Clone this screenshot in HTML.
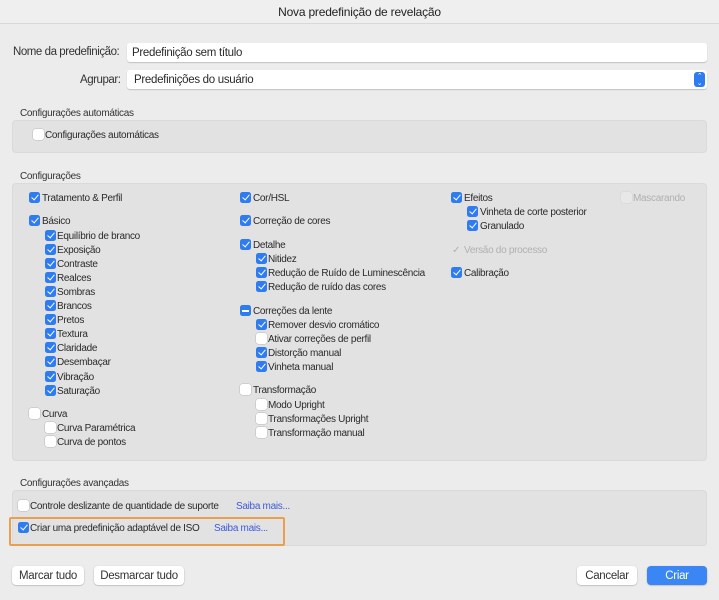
<!DOCTYPE html>
<html><head><meta charset="utf-8"><style>
*{margin:0;padding:0;box-sizing:border-box}
body{width:719px;height:600px;background:#ececec;font-family:"Liberation Sans",sans-serif;color:#2a2a2a;position:relative;overflow:hidden;font-size:10px;letter-spacing:-0.3px}
.a{position:absolute;white-space:nowrap}
.tb{position:absolute;left:0;top:0;width:719px;height:24px;background:#f0eff0;border-bottom:1px solid #d8d8d8;text-align:center;font-size:12px;line-height:24px;color:#222;letter-spacing:-0.2px}
.in{position:absolute;left:127px;width:580px;height:19px;background:#fff;border-radius:3px;box-shadow:0 1px 1px rgba(0,0,0,.18);font-size:11.5px;line-height:20px;padding-left:5px;letter-spacing:-0.3px}
.lbl{font-size:11.5px;color:#333;letter-spacing:-0.45px}
.pn{position:absolute;left:12px;width:695px;background:#e2e2e2;border-radius:4px;border:1px solid #dadada}
.c{position:absolute;width:11px;height:11px;border-radius:2.5px;background:#fff;box-shadow:0 0 0 .5px #bbb}
.c.k{background:#2f7cf0;box-shadow:none}
.c.k::after{content:"";position:absolute;left:3.5px;top:1px;width:3px;height:6px;border:solid #fff;border-width:0 1.8px 1.8px 0;transform:rotate(40deg)}
.c.m{background:#2f7cf0;box-shadow:none}
.c.m::after{content:"";position:absolute;left:2px;top:4.5px;width:7px;height:2px;background:#fff}
.c.d{background:#e8e8e8;box-shadow:0 0 0 .5px #d4d4d4}
.t{position:absolute;white-space:nowrap;line-height:12px;margin-top:1px}
.g{color:#b0b0b0}
.btn{position:absolute;height:19px;background:#fff;border-radius:4px;box-shadow:0 .5px 1.5px rgba(0,0,0,.3);font-size:11.5px;line-height:20px;text-align:center;color:#333;letter-spacing:-0.3px}
.lnk{color:#3d5bd9}
</style></head><body>
<div class="tb">Nova predefinição de revelação</div>
<div class="a lbl" style="left:13px;top:46px">Nome da predefinição:</div>
<div class="in" style="top:43px">Predefinição sem título</div>
<div class="a lbl" style="left:80px;top:74px">Agrupar:</div>
<div class="in" style="top:70px;padding-left:7px">Predefinições do usuário</div>
<div class="a" style="left:694px;top:72px;width:11px;height:15px;background:#2f7cf0;border-radius:3px;color:#fff;font-size:7px;line-height:7px;text-align:center;padding-top:1px">⌃<br>⌄</div>

<div class="a" style="left:20px;top:108px;color:#333">Configurações automáticas</div>
<div class="pn" style="top:120px;height:33px"></div>

<div class="a" style="left:20px;top:171px;color:#333">Configurações</div>
<div class="pn" style="top:183px;height:278px"></div>

<div class="a" style="left:20px;top:478px;color:#333">Configurações avançadas</div>
<div class="pn" style="top:490px;height:56px"></div>
<div class="a" style="left:9px;top:517px;width:276px;height:29px;border:2px solid #e9a04e;border-radius:2px"></div>

<div class="btn" style="left:12px;top:566px;width:72px">Marcar tudo</div>
<div class="btn" style="left:94px;top:566px;width:90px">Desmarcar tudo</div>
<div class="btn" style="left:577px;top:566px;width:60px">Cancelar</div>
<div class="btn" style="left:647px;top:566px;width:60px;background:#3a86f5;color:#fff">Criar</div>

<div class="c" style="left:33px;top:129px"></div><div class="t" style="left:45px;top:129px">Configurações automáticas</div>

<div class="c k" style="left:29px;top:192px"></div><div class="t" style="left:42px;top:192px">Tratamento &amp; Perfil</div>
<div class="c k" style="left:29px;top:215px"></div><div class="t" style="left:42px;top:215px">Básico</div>
<div class="c k" style="left:45px;top:230px"></div><div class="t" style="left:57px;top:230px">Equilíbrio de branco</div>
<div class="c k" style="left:45px;top:244px"></div><div class="t" style="left:57px;top:244px">Exposição</div>
<div class="c k" style="left:45px;top:258px"></div><div class="t" style="left:57px;top:258px">Contraste</div>
<div class="c k" style="left:45px;top:272px"></div><div class="t" style="left:57px;top:272px">Realces</div>
<div class="c k" style="left:45px;top:286px"></div><div class="t" style="left:57px;top:286px">Sombras</div>
<div class="c k" style="left:45px;top:300px"></div><div class="t" style="left:57px;top:300px">Brancos</div>
<div class="c k" style="left:45px;top:314px"></div><div class="t" style="left:57px;top:314px">Pretos</div>
<div class="c k" style="left:45px;top:328px"></div><div class="t" style="left:57px;top:328px">Textura</div>
<div class="c k" style="left:45px;top:342px"></div><div class="t" style="left:57px;top:342px">Claridade</div>
<div class="c k" style="left:45px;top:356px"></div><div class="t" style="left:57px;top:356px">Desembaçar</div>
<div class="c k" style="left:45px;top:371px"></div><div class="t" style="left:57px;top:371px">Vibração</div>
<div class="c k" style="left:45px;top:385px"></div><div class="t" style="left:57px;top:385px">Saturação</div>
<div class="c" style="left:29px;top:408px"></div><div class="t" style="left:42px;top:408px">Curva</div>
<div class="c" style="left:45px;top:422px"></div><div class="t" style="left:57px;top:422px">Curva Paramétrica</div>
<div class="c" style="left:45px;top:436px"></div><div class="t" style="left:57px;top:436px">Curva de pontos</div>

<div class="c k" style="left:240px;top:192px"></div><div class="t" style="left:253px;top:192px">Cor/HSL</div>
<div class="c k" style="left:240px;top:215px"></div><div class="t" style="left:253px;top:215px">Correção de cores</div>
<div class="c k" style="left:240px;top:239px"></div><div class="t" style="left:253px;top:239px">Detalhe</div>
<div class="c k" style="left:256px;top:253px"></div><div class="t" style="left:268px;top:253px">Nitidez</div>
<div class="c k" style="left:256px;top:267px"></div><div class="t" style="left:268px;top:267px">Redução de Ruído de Luminescência</div>
<div class="c k" style="left:256px;top:281px"></div><div class="t" style="left:268px;top:281px">Redução de ruído das cores</div>
<div class="c m" style="left:240px;top:305px"></div><div class="t" style="left:253px;top:305px">Correções da lente</div>
<div class="c k" style="left:256px;top:319px"></div><div class="t" style="left:268px;top:319px">Remover desvio cromático</div>
<div class="c" style="left:256px;top:333px"></div><div class="t" style="left:268px;top:333px">Ativar correções de perfil</div>
<div class="c k" style="left:256px;top:347px"></div><div class="t" style="left:268px;top:347px">Distorção manual</div>
<div class="c k" style="left:256px;top:361px"></div><div class="t" style="left:268px;top:361px">Vinheta manual</div>
<div class="c" style="left:240px;top:384px"></div><div class="t" style="left:253px;top:384px">Transformação</div>
<div class="c" style="left:256px;top:399px"></div><div class="t" style="left:268px;top:399px">Modo Upright</div>
<div class="c" style="left:256px;top:413px"></div><div class="t" style="left:268px;top:413px">Transformações Upright</div>
<div class="c" style="left:256px;top:427px"></div><div class="t" style="left:268px;top:427px">Transformação manual</div>

<div class="c k" style="left:451px;top:192px"></div><div class="t" style="left:464px;top:192px">Efeitos</div>
<div class="c k" style="left:467px;top:206px"></div><div class="t" style="left:480px;top:206px">Vinheta de corte posterior</div>
<div class="c k" style="left:467px;top:220px"></div><div class="t" style="left:480px;top:220px">Granulado</div>
<div class="t g" style="left:452px;top:244px">✓</div><div class="t g" style="left:464px;top:244px">Versão do processo</div>
<div class="c k" style="left:451px;top:267px"></div><div class="t" style="left:464px;top:267px">Calibração</div>
<div class="c d" style="left:621px;top:192px"></div><div class="t g" style="left:633px;top:192px">Mascarando</div>

<div class="c" style="left:18px;top:500px"></div><div class="t" style="left:30px;top:500px">Controle deslizante de quantidade de suporte</div><div class="t lnk" style="left:236px;top:500px">Saiba mais...</div>
<div class="c k" style="left:18px;top:522px"></div><div class="t" style="left:30px;top:522px">Criar uma predefinição adaptável de ISO</div><div class="t lnk" style="left:214px;top:522px">Saiba mais...</div>
</body></html>
